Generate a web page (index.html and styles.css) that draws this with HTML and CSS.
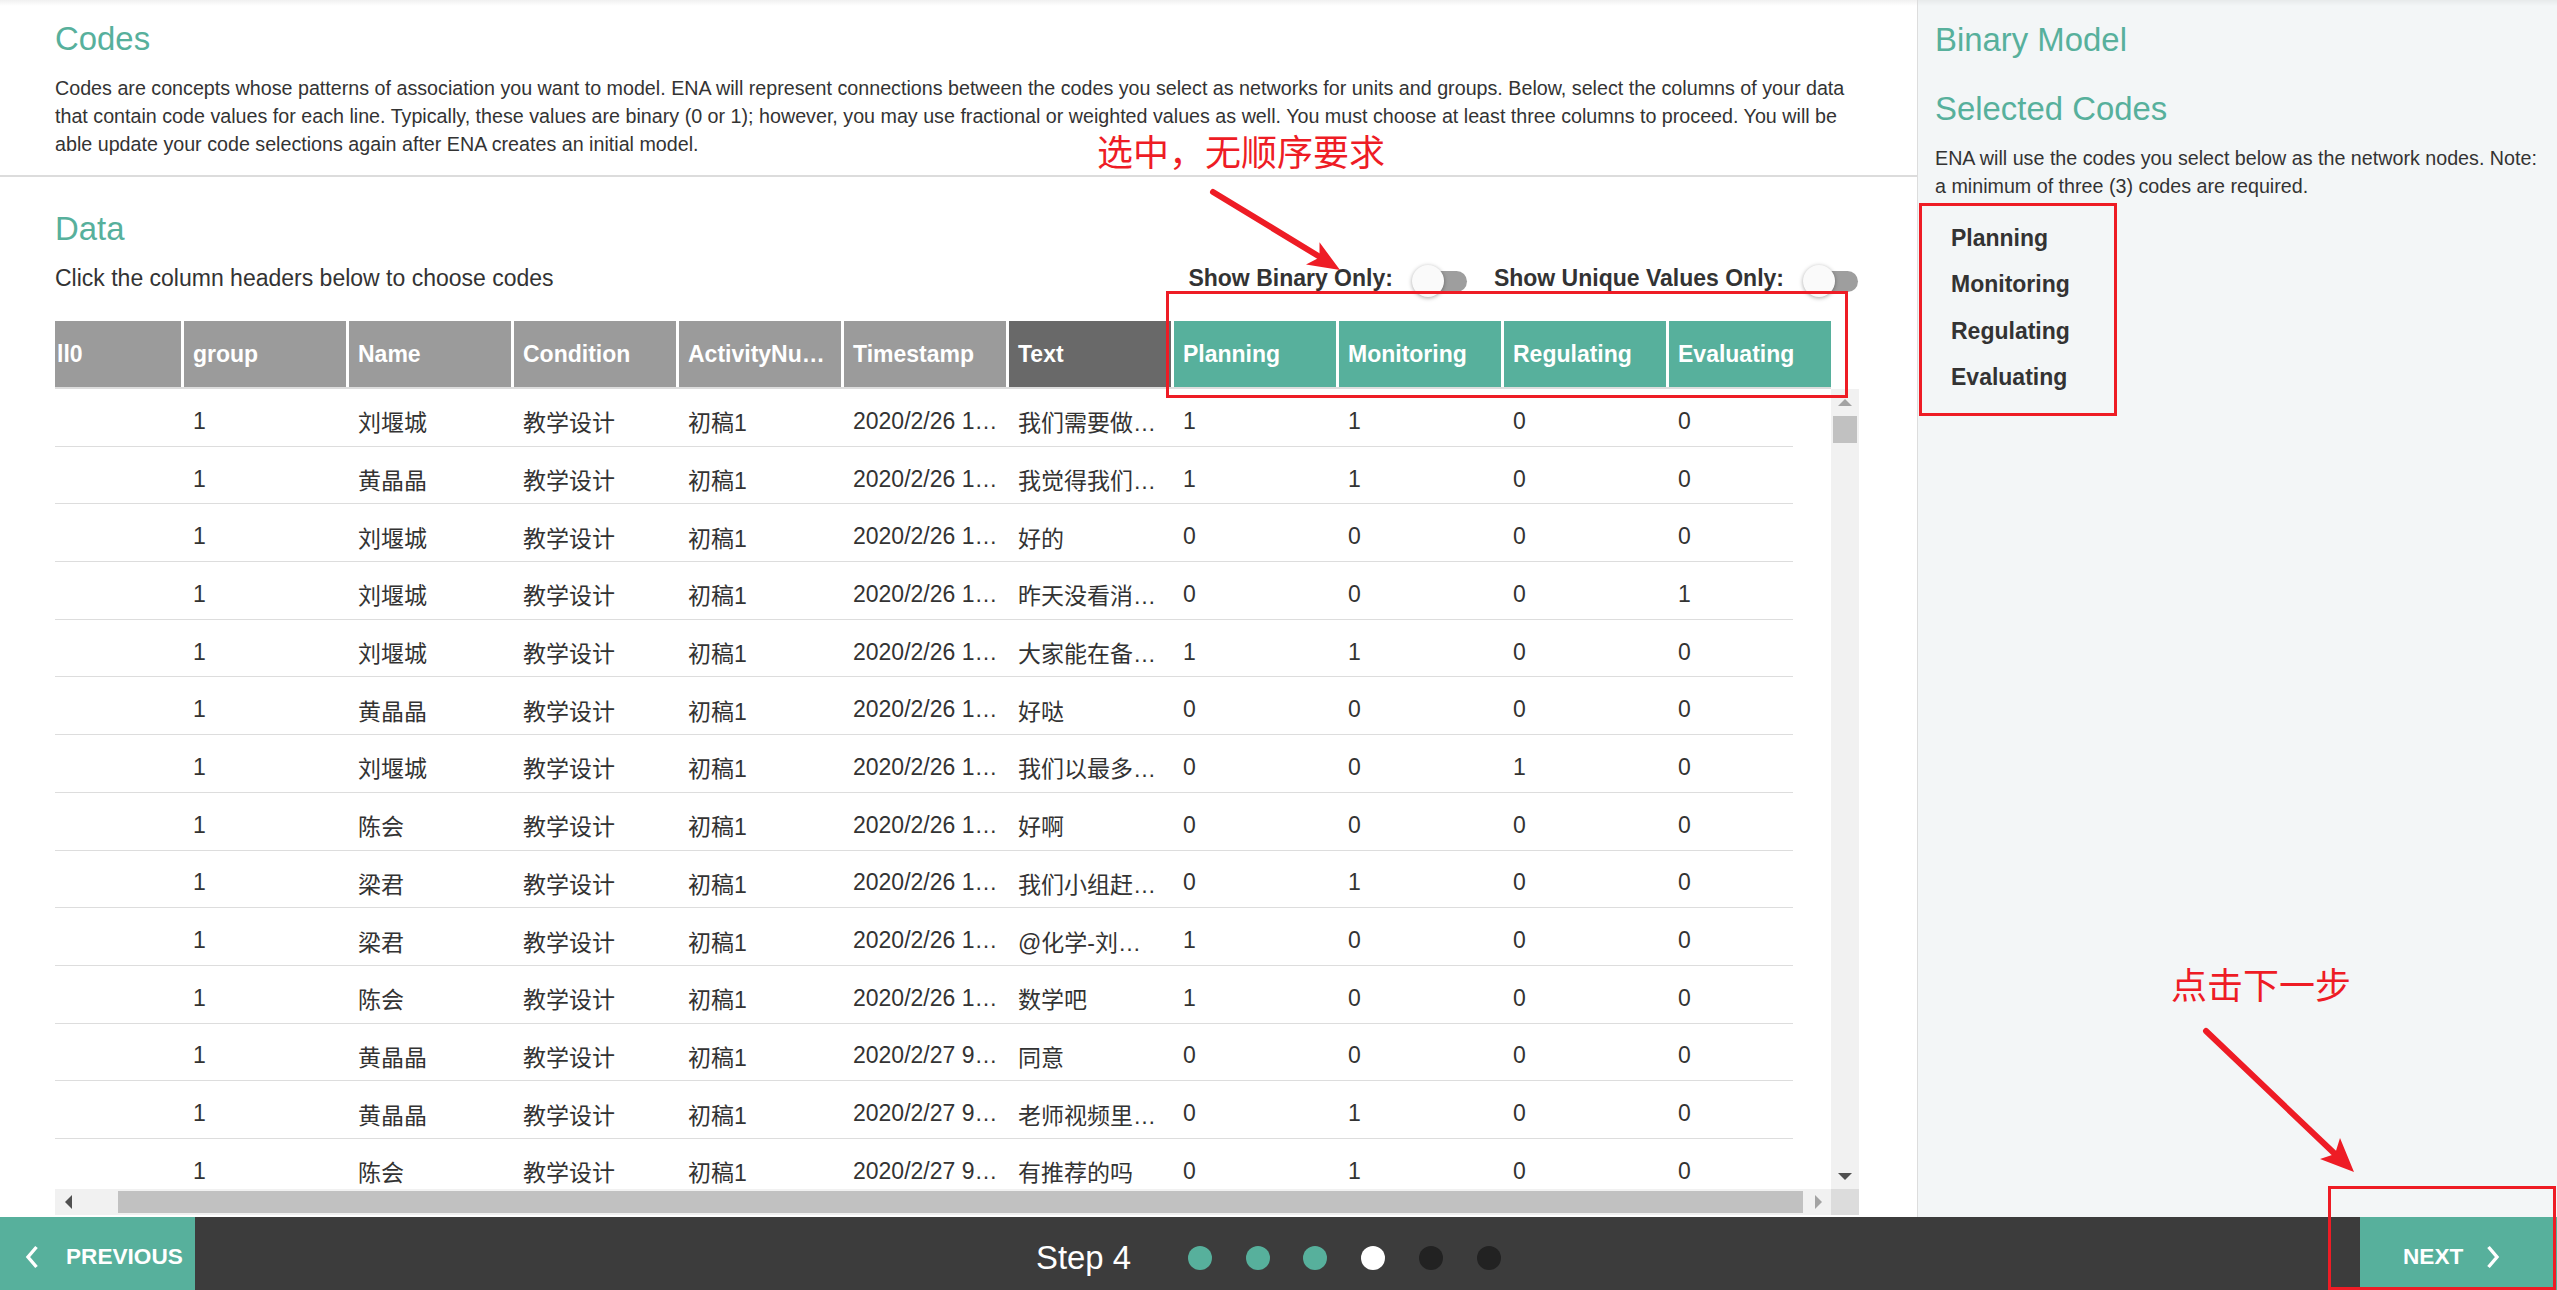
FILE: index.html
```html
<!DOCTYPE html>
<html lang="zh-CN">
<head>
<meta charset="utf-8">
<title>Codes</title>
<link rel="stylesheet" href="styles.css">
</head>
<body>
<div class="app">
  <div class="content">
    <main class="main">
      <section class="codes">
        <h2 class="title">Codes</h2>
        <p class="desc">Codes are concepts whose patterns of association you want to model. ENA will represent connections between the codes you select as networks for units and groups. Below, select the columns of your data that contain code values for each line. Typically, these values are binary (0 or 1); however, you may use fractional or weighted values as well. You must choose at least three columns to proceed. You will be able update your code selections again after ENA creates an initial model.</p>
      </section>
      <section class="data">
        <h2 class="title">Data</h2>
        <div class="toolbar">
          <span class="hint">Click the column headers below to choose codes</span>
          <div class="toggles">
            <span class="toggle-label">Show Binary Only:</span>
            <span class="switch"><span class="track"></span><span class="knob"></span></span>
            <span class="toggle-label">Show Unique Values Only:</span>
            <span class="switch"><span class="track"></span><span class="knob"></span></span>
          </div>
        </div>
        <div class="grid">
          <div class="thead">
            <div class="th first">ll0</div>
            <div class="th">group</div>
            <div class="th">Name</div>
            <div class="th">Condition</div>
            <div class="th">ActivityNu…</div>
            <div class="th">Timestamp</div>
            <div class="th dark">Text</div>
            <div class="th code">Planning</div>
            <div class="th code">Monitoring</div>
            <div class="th code">Regulating</div>
            <div class="th code">Evaluating</div>
          </div>
          <div class="headfill"></div>
          <div class="tbody">
            <div class="tr"><div class="td"></div><div class="td">1</div><div class="td">刘堰城</div><div class="td">教学设计</div><div class="td">初稿1</div><div class="td">2020/2/26 1…</div><div class="td">我们需要做…</div><div class="td">1</div><div class="td">1</div><div class="td">0</div><div class="td">0</div></div>
            <div class="tr"><div class="td"></div><div class="td">1</div><div class="td">黄晶晶</div><div class="td">教学设计</div><div class="td">初稿1</div><div class="td">2020/2/26 1…</div><div class="td">我觉得我们…</div><div class="td">1</div><div class="td">1</div><div class="td">0</div><div class="td">0</div></div>
            <div class="tr"><div class="td"></div><div class="td">1</div><div class="td">刘堰城</div><div class="td">教学设计</div><div class="td">初稿1</div><div class="td">2020/2/26 1…</div><div class="td">好的</div><div class="td">0</div><div class="td">0</div><div class="td">0</div><div class="td">0</div></div>
            <div class="tr"><div class="td"></div><div class="td">1</div><div class="td">刘堰城</div><div class="td">教学设计</div><div class="td">初稿1</div><div class="td">2020/2/26 1…</div><div class="td">昨天没看消…</div><div class="td">0</div><div class="td">0</div><div class="td">0</div><div class="td">1</div></div>
            <div class="tr"><div class="td"></div><div class="td">1</div><div class="td">刘堰城</div><div class="td">教学设计</div><div class="td">初稿1</div><div class="td">2020/2/26 1…</div><div class="td">大家能在备…</div><div class="td">1</div><div class="td">1</div><div class="td">0</div><div class="td">0</div></div>
            <div class="tr"><div class="td"></div><div class="td">1</div><div class="td">黄晶晶</div><div class="td">教学设计</div><div class="td">初稿1</div><div class="td">2020/2/26 1…</div><div class="td">好哒</div><div class="td">0</div><div class="td">0</div><div class="td">0</div><div class="td">0</div></div>
            <div class="tr"><div class="td"></div><div class="td">1</div><div class="td">刘堰城</div><div class="td">教学设计</div><div class="td">初稿1</div><div class="td">2020/2/26 1…</div><div class="td">我们以最多…</div><div class="td">0</div><div class="td">0</div><div class="td">1</div><div class="td">0</div></div>
            <div class="tr"><div class="td"></div><div class="td">1</div><div class="td">陈会</div><div class="td">教学设计</div><div class="td">初稿1</div><div class="td">2020/2/26 1…</div><div class="td">好啊</div><div class="td">0</div><div class="td">0</div><div class="td">0</div><div class="td">0</div></div>
            <div class="tr"><div class="td"></div><div class="td">1</div><div class="td">梁君</div><div class="td">教学设计</div><div class="td">初稿1</div><div class="td">2020/2/26 1…</div><div class="td">我们小组赶…</div><div class="td">0</div><div class="td">1</div><div class="td">0</div><div class="td">0</div></div>
            <div class="tr"><div class="td"></div><div class="td">1</div><div class="td">梁君</div><div class="td">教学设计</div><div class="td">初稿1</div><div class="td">2020/2/26 1…</div><div class="td">@化学-刘…</div><div class="td">1</div><div class="td">0</div><div class="td">0</div><div class="td">0</div></div>
            <div class="tr"><div class="td"></div><div class="td">1</div><div class="td">陈会</div><div class="td">教学设计</div><div class="td">初稿1</div><div class="td">2020/2/26 1…</div><div class="td">数学吧</div><div class="td">1</div><div class="td">0</div><div class="td">0</div><div class="td">0</div></div>
            <div class="tr"><div class="td"></div><div class="td">1</div><div class="td">黄晶晶</div><div class="td">教学设计</div><div class="td">初稿1</div><div class="td">2020/2/27 9…</div><div class="td">同意</div><div class="td">0</div><div class="td">0</div><div class="td">0</div><div class="td">0</div></div>
            <div class="tr"><div class="td"></div><div class="td">1</div><div class="td">黄晶晶</div><div class="td">教学设计</div><div class="td">初稿1</div><div class="td">2020/2/27 9…</div><div class="td">老师视频里…</div><div class="td">0</div><div class="td">1</div><div class="td">0</div><div class="td">0</div></div>
            <div class="tr"><div class="td"></div><div class="td">1</div><div class="td">陈会</div><div class="td">教学设计</div><div class="td">初稿1</div><div class="td">2020/2/27 9…</div><div class="td">有推荐的吗</div><div class="td">0</div><div class="td">1</div><div class="td">0</div><div class="td">0</div></div>
          </div>
          <div class="vbar">
            <div class="sb-btn"><span class="tri-up"></span></div>
            <div class="vthumb"></div>
            <div class="sb-spacer"></div>
            <div class="sb-btn"><span class="tri-down"></span></div>
          </div>
          <div class="hbar">
            <div class="sb-btn h"><span class="tri-left"></span></div>
            <div class="htrack-pre"></div>
            <div class="hthumb"></div>
            <div class="sb-btn h"><span class="tri-right"></span></div>
          </div>
          <div class="corner"></div>
        </div>
      </section>
    </main>
    <aside class="side">
      <h2 class="title">Binary Model</h2>
      <h2 class="title sub">Selected Codes</h2>
      <p class="side-desc">ENA will use the codes you select below as the network nodes. Note: a minimum of three (3) codes are required.</p>
      <ul class="code-list">
        <li>Planning</li>
        <li>Monitoring</li>
        <li>Regulating</li>
        <li>Evaluating</li>
      </ul>
    </aside>
  </div>
  <footer class="footer">
    <div class="btn prev">
      <svg class="chev" width="14" height="24" viewBox="0 0 14 24"><polyline points="11.5,2 3,12 11.5,22" fill="none" stroke="#fff" stroke-width="3.4"/></svg>
      <span>PREVIOUS</span>
    </div>
    <div class="steps">
      <span class="step-label">Step 4</span>
      <div class="dots">
        <span class="dot done"></span>
        <span class="dot done"></span>
        <span class="dot done"></span>
        <span class="dot current"></span>
        <span class="dot todo"></span>
        <span class="dot todo"></span>
      </div>
    </div>
    <div class="btn next">
      <span>NEXT</span>
      <svg class="chev" width="14" height="24" viewBox="0 0 14 24"><polyline points="2.5,2 11,12 2.5,22" fill="none" stroke="#fff" stroke-width="3.4"/></svg>
    </div>
  </footer>

  <div class="annot">
    <svg class="annot-svg" width="2557" height="1290" viewBox="0 0 2557 1290">
      <line x1="1213" y1="192" x2="1320" y2="257" stroke="#ee1c25" stroke-width="6" stroke-linecap="round"/>
      <polygon points="1340,270 1306,264.5 1319.5,257.5 1319.5,242.3" fill="#ee1c25"/>
      <line x1="2206" y1="1031" x2="2335" y2="1154" stroke="#ee1c25" stroke-width="6" stroke-linecap="round"/>
      <polygon points="2354,1172 2320,1159 2335,1154 2340,1138" fill="#ee1c25"/>
    </svg>
    <div class="note note-1">选中，无顺序要求</div>
    <div class="note note-2">点击下一步</div>
    <div class="mark mark-1"></div>
    <div class="mark mark-2"></div>
    <div class="mark mark-3"></div>
  </div>
</div>
</body>
</html>
```

FILE: styles.css
```css
* { box-sizing: border-box; }
html, body { margin: 0; padding: 0; }
body {
  width: 2557px;
  height: 1290px;
  overflow: hidden;
  background: #fff;
  color: #333;
  font-family: "Liberation Sans", Arial, "Noto Sans CJK SC", sans-serif;
}
.app {
  position: relative;
  width: 2557px;
  height: 1290px;
  display: flex;
  flex-direction: column;
}
.content {
  display: flex;
  height: 1217px;
  flex: none;
}
.main {
  width: 1917px;
  flex: none;
  background: #fff linear-gradient(to bottom, rgba(0,0,0,0.06), rgba(0,0,0,0) 6px) no-repeat;
}
.title {
  margin: 0;
  font-size: 32.9px;
  line-height: 36px;
  font-weight: 400;
  color: #57b09c;
}
.codes {
  padding: 21px 56px 17px 55px;
  border-bottom: 2px solid #dcdcdc;
}
.desc {
  margin: 17px 0 0;
  font-size: 19.7px;
  line-height: 28px;
}
.data {
  padding: 34px 0 0 55px;
}
.toolbar {
  margin-top: 15px;
  width: 1804px;
  height: 33px;
  display: flex;
  align-items: center;
  justify-content: space-between;
}
.hint { font-size: 23px; }
.toggles {
  display: flex;
  align-items: center;
}
.toggle-label {
  font-weight: 700;
  font-size: 23px;
  color: #333;
}
.switch {
  position: relative;
  width: 56px;
  height: 33px;
  margin-left: 19px;
  margin-top: 6px;
}
.switch + .toggle-label { margin-left: 26px; }
.track {
  position: absolute;
  left: 12px;
  right: 1px;
  top: 6px;
  height: 21px;
  border-radius: 11px;
  background: #9e9e9e;
}
.knob {
  position: absolute;
  left: 0;
  top: 0;
  width: 32px;
  height: 32px;
  border-radius: 50%;
  background: #fafafa;
  box-shadow: 0 1px 4px rgba(0,0,0,0.35);
}
.grid {
  margin-top: 26px;
  width: 1804px;
  display: grid;
  grid-template-columns: 1776px 28px;
  grid-template-rows: 68px 800px 26px;
}
.thead {
  display: grid;
  grid-template-columns: 126px repeat(10, 162px);
  column-gap: 3px;
  border-bottom: 2px solid #dddddd;
}
.th {
  background: #9b9b9b;
  color: #fff;
  font-weight: 700;
  font-size: 23px;
  padding-left: 9px;
  display: flex;
  align-items: center;
  white-space: nowrap;
  overflow: hidden;
}
.th.first { padding-left: 2px; }
.th.dark { background: #696969; }
.th.code { background: #57b09c; }
.headfill { background: #fff; }
.tbody {
  overflow: hidden;
  background: #fff;
}
.tr {
  display: grid;
  grid-template-columns: 129px repeat(9, 165px) 124px;
  width: 1738px;
  height: 57.7px;
  border-bottom: 1px solid #dddddd;
  align-items: center;
}
.td {
  padding: 8px 0 0 9px;
  font-size: 23px;
  white-space: nowrap;
  overflow: hidden;
  color: #333;
}
.vbar {
  background: #f1f1f1;
  display: flex;
  flex-direction: column;
}
.sb-btn {
  height: 26px;
  flex: none;
  display: flex;
  align-items: center;
  justify-content: center;
}
.sb-btn.h {
  width: 26px;
  height: 26px;
}
.sb-spacer { flex: 1; }
.vthumb {
  height: 27px;
  margin: 1px 2px 0;
  background: #c1c1c1;
  flex: none;
}
.tri-up {
  width: 0; height: 0;
  border-left: 7px solid transparent;
  border-right: 7px solid transparent;
  border-bottom: 7px solid #a3a3a3;
}
.tri-down {
  width: 0; height: 0;
  border-left: 7px solid transparent;
  border-right: 7px solid transparent;
  border-top: 7px solid #505050;
}
.tri-left {
  width: 0; height: 0;
  border-top: 7px solid transparent;
  border-bottom: 7px solid transparent;
  border-right: 7px solid #505050;
}
.tri-right {
  width: 0; height: 0;
  border-top: 7px solid transparent;
  border-bottom: 7px solid transparent;
  border-left: 7px solid #a3a3a3;
}
.hbar {
  background: #f1f1f1;
  display: flex;
  align-items: stretch;
}
.htrack-pre { width: 37px; flex: none; }
.hthumb {
  width: 1685px;
  margin: 2px 2px 2px 0;
  background: #c1c1c1;
  flex: none;
}
.corner { background: #dcdcdc; }

.side {
  flex: 1;
  border-left: 1px solid #dddddd;
  background: #f3f6f7 linear-gradient(to bottom, rgba(0,0,0,0.05), rgba(0,0,0,0) 6px) no-repeat;
  padding: 22px 12px 0 17px;
}
.title.sub { margin-top: 33px; }
.side-desc {
  margin: 17px 0 0;
  font-size: 19.7px;
  line-height: 28px;
}
.code-list {
  margin: 15px 0 0;
  padding: 0 0 0 16px;
  list-style: none;
}
.code-list li {
  height: 46.3px;
  line-height: 46.3px;
  font-size: 23px;
  font-weight: 700;
  color: #333;
}

.footer {
  height: 73px;
  flex: none;
  background: #3c3c3c;
  display: flex;
  color: #fff;
}
.btn {
  background: #57b09c;
  display: flex;
  align-items: center;
  font-weight: 700;
  font-size: 22.6px;
  color: #fff;
  padding-top: 7px;
}
.btn.prev {
  width: 195px;
  padding-left: 25px;
  gap: 27px;
}
.btn.next {
  width: 197px;
  margin-left: auto;
  padding-left: 43px;
  gap: 23px;
}
.steps {
  display: flex;
  align-items: center;
  padding-left: 841px;
  padding-top: 8px;
}
.step-label { font-size: 32.9px; }
.dots {
  display: flex;
  gap: 33.7px;
  margin-left: 57px;
}
.dot {
  width: 24px;
  height: 24px;
  border-radius: 50%;
}
.dot.done { background: #57b09c; }
.dot.current { background: #ffffff; }
.dot.todo { background: #222222; }

.annot {
  position: absolute;
  left: 0;
  top: 0;
  width: 2557px;
  height: 1290px;
  pointer-events: none;
}
.annot-svg {
  position: absolute;
  left: 0;
  top: 0;
}
.note {
  position: absolute;
  font-family: "Noto Sans CJK SC", sans-serif;
  font-size: 36px;
  line-height: 36px;
  color: #ee1c25;
  white-space: nowrap;
}
.note-1 { left: 1097px; top: 132px; }
.note-2 { left: 2171px; top: 965px; }
.mark {
  position: absolute;
  border: 3px solid #ee1c25;
}
.mark-1 { left: 1166px; top: 291px; width: 682px; height: 107px; }
.mark-2 { left: 1919px; top: 203px; width: 198px; height: 213px; }
.mark-3 { left: 2328px; top: 1186px; width: 228px; height: 104px; }
```
